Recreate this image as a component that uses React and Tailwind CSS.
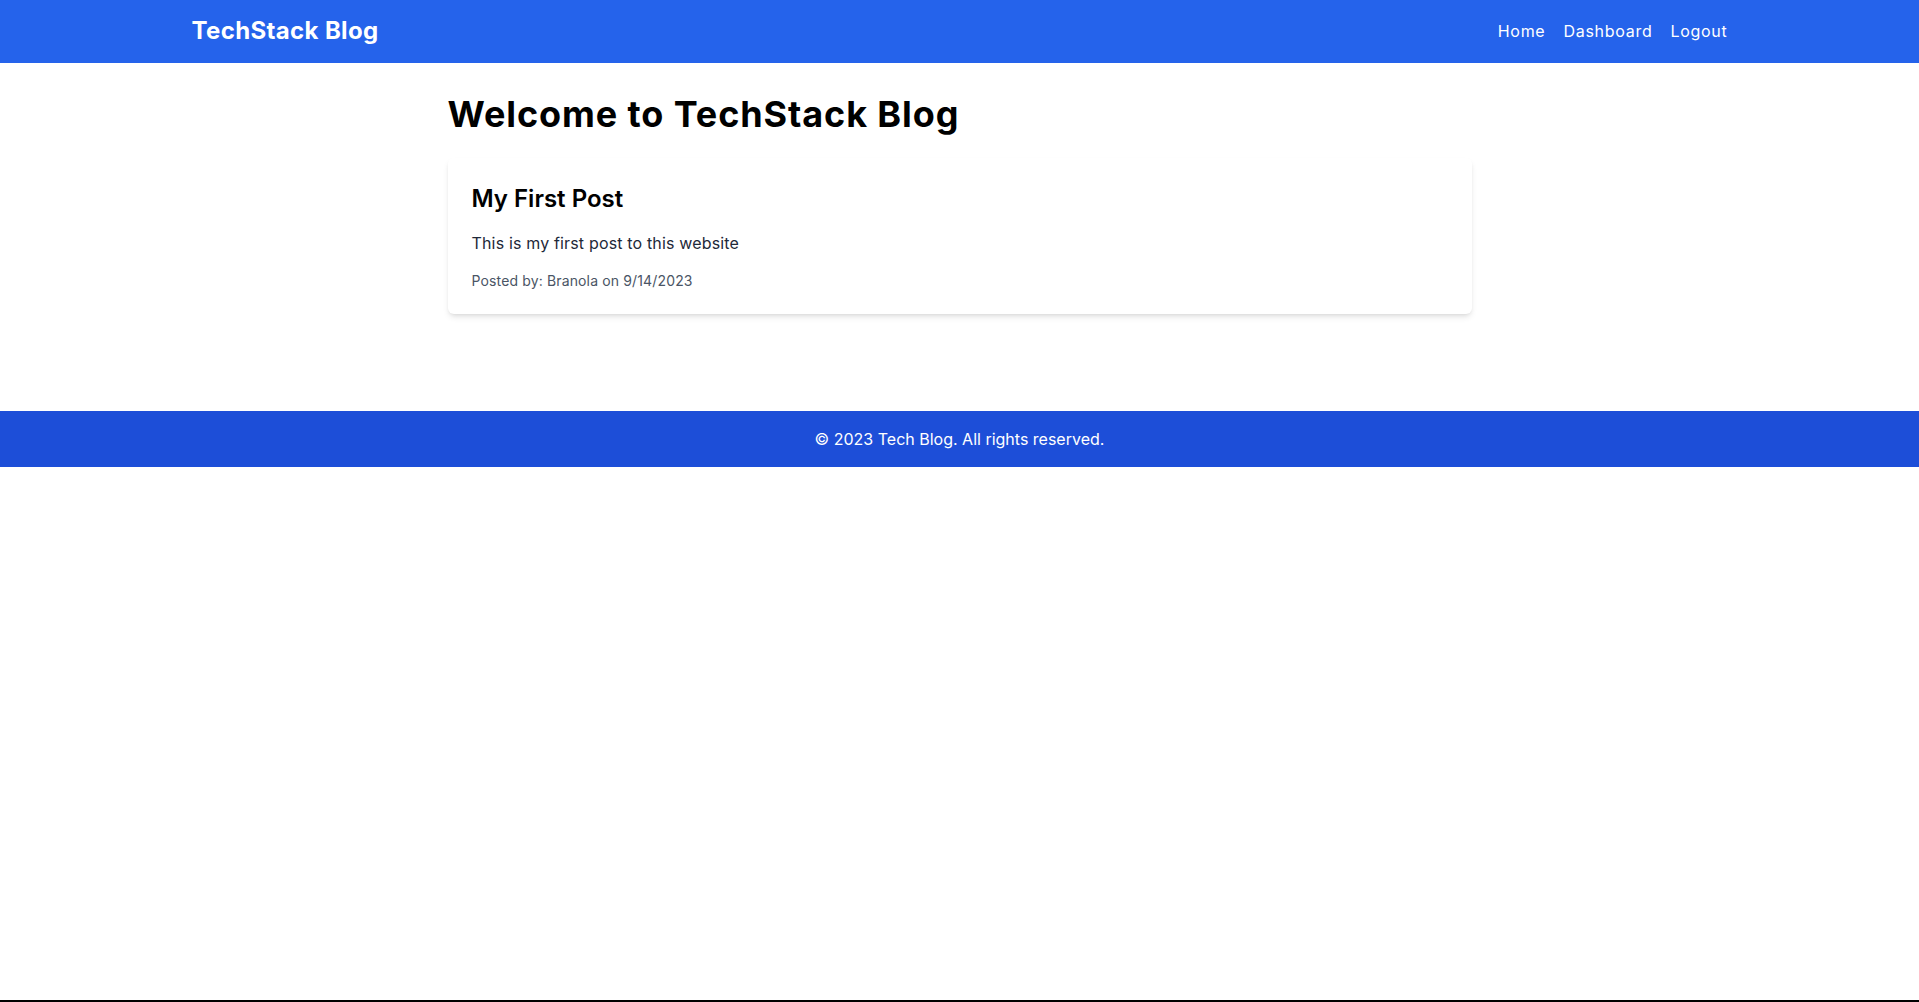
import React from 'react';

const posts = [
  {
    id: 1,
    title: 'My First Post',
    content: 'This is my first post to this website',
    author: 'Branola',
    date: '9/14/2023',
  },
];

function Navbar() {
  return (
    <nav className="bg-[#2563eb] text-white h-[63px] pb-[2px] flex items-center">
      <div className="w-full max-w-[1536px] mx-auto flex items-center justify-between">
        <a href="#" className="text-2xl font-bold tracking-[0.015em]">
          TechStack Blog
        </a>
        <div className="flex items-center gap-[18px] text-base tracking-[0.045em]">
          <a href="#">Home</a>
          <a href="#">Dashboard</a>
          <a href="#">Logout</a>
        </div>
      </div>
    </nav>
  );
}

function Footer() {
  return (
    <footer className="bg-[#1d4ed8] text-white text-center py-4 mt-[65px]">
      <p>© 2023 Tech Blog. All rights reserved.</p>
    </footer>
  );
}

export default function App() {
  return (
    <div
      className="min-h-screen flex flex-col bg-white text-black"
      style={{ fontFamily: 'Inter, "Open Sans", sans-serif' }}
    >
      <Navbar />
      <main className="max-w-5xl w-full mx-auto pt-[31px] pb-8">
        <h1 className="text-4xl font-bold mb-6 tracking-[0.025em]">Welcome to TechStack Blog</h1>
        <div className="space-y-6">
          {posts.map((post) => (
            <div key={post.id} className="bg-white rounded-md shadow-md px-6 pt-[25px] pb-[23px]">
              <h2 className="text-2xl font-semibold mb-4">{post.title}</h2>
              <p className="text-gray-800 mb-4 tracking-[0.01em]">{post.content}</p>
              <p className="text-sm text-gray-600 tracking-[0.01em]">
                Posted by: {post.author} on {post.date}
              </p>
            </div>
          ))}
        </div>
      </main>
      <Footer />
      <div className="mt-auto h-[2px] bg-black" />
    </div>
  );
}
